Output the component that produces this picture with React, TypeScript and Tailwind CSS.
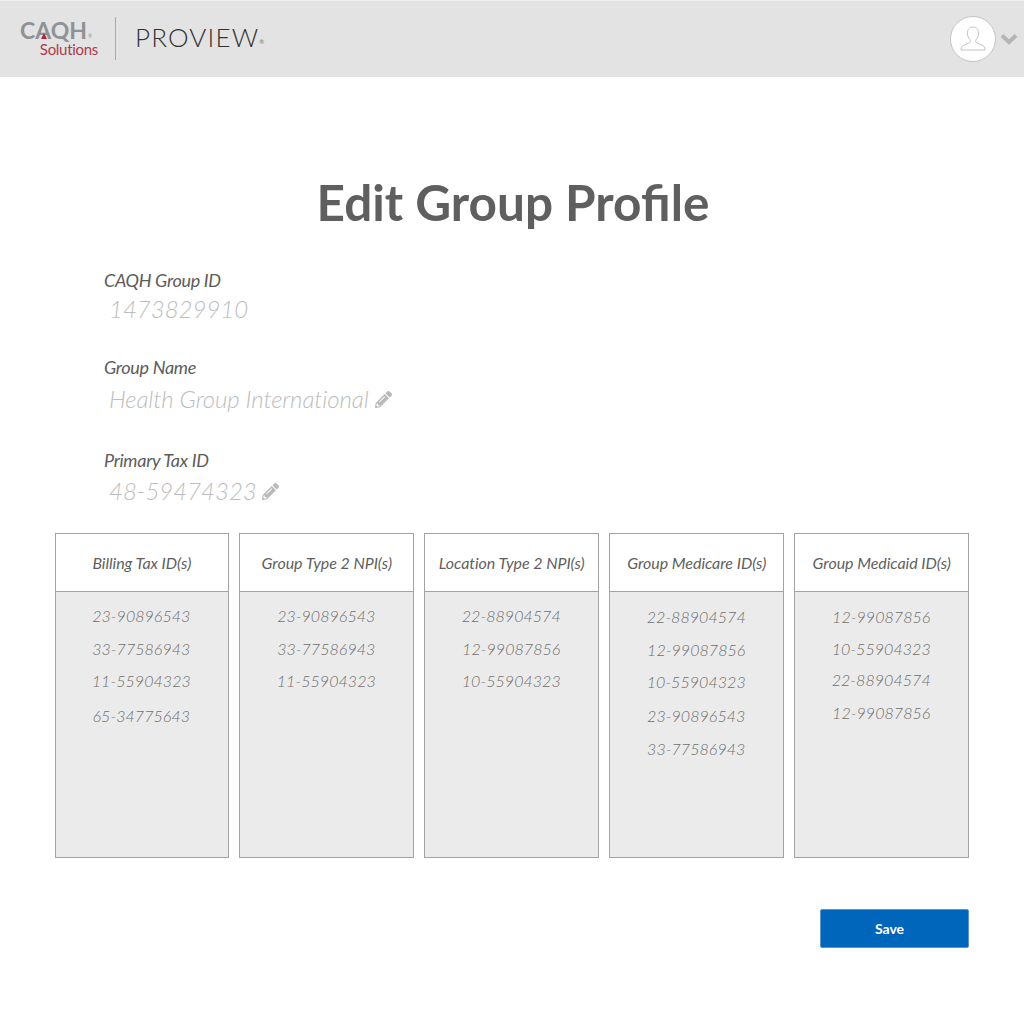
import React from "react";
import { FaPencilAlt } from "react-icons/fa";

type Row = { t: string; c: string };

const columns: { title: string; rows: Row[] }[] = [
  {
    title: "Billing Tax ID(s)",
    rows: [
      { t: "23-90896543", c: "mt-[14px]" },
      { t: "33-77586943", c: "mt-[13px]" },
      { t: "11-55904323", c: "mt-[12px]" },
      { t: "65-34775643", c: "mt-[15px]" },
    ],
  },
  {
    title: "Group Type 2 NPI(s)",
    rows: [
      { t: "23-90896543", c: "mt-[14px]" },
      { t: "33-77586943", c: "mt-[13px]" },
      { t: "11-55904323", c: "mt-[12px]" },
    ],
  },
  {
    title: "Location Type 2 NPI(s)",
    rows: [
      { t: "22-88904574", c: "mt-[14px]" },
      { t: "12-99087856", c: "mt-[13px]" },
      { t: "10-55904323", c: "mt-[12px]" },
    ],
  },
  {
    title: "Group Medicare ID(s)",
    rows: [
      { t: "22-88904574", c: "mt-[15px]" },
      { t: "12-99087856", c: "mt-[13px]" },
      { t: "10-55904323", c: "mt-[12px]" },
      { t: "23-90896543", c: "mt-[14px]" },
      { t: "33-77586943", c: "mt-[13px]" },
    ],
  },
  {
    title: "Group Medicaid ID(s)",
    rows: [
      { t: "12-99087856", c: "mt-[15px]" },
      { t: "10-55904323", c: "mt-[12px]" },
      { t: "22-88904574", c: "mt-[11px]" },
      { t: "12-99087856", c: "mt-[13px]" },
    ],
  },
];

export default function App() {
  return (
    <div className="w-[1024px] h-[1024px] bg-white font-['Lato',sans-serif] overflow-hidden">
      <header className="h-[77px] bg-[#e3e3e3] border-t border-t-[#efefef] flex items-center pl-[20px] pr-[6px]">
        <div className="relative w-[78px] flex flex-col items-end mt-[-3px]">
          <div className="flex items-start w-full h-[22px]">
            <span className="text-[23px] leading-[22px] font-bold text-[#8f9294]">CAQH</span>
            <span className="text-[5px] leading-[5px] text-[#999] mt-[15px] ml-[1px]">®</span>
          </div>
          <span className="text-[15px] leading-[16px] tracking-[-0.3px] text-[#b03a4c]">Solutions</span>
          <svg viewBox="0 0 6 6" className="absolute left-[21px] top-[14px] w-[6px] h-[6px]" fill="#a8283c">
            <path d="M3 0l3 6H0z" />
          </svg>
        </div>
        <div className="w-px h-[43px] bg-[#a9a9a9] ml-[17px] mt-[-2px]" />
        <div className="ml-[19px] flex items-end text-[#333] mt-[-4px]">
          <span className="text-[26px] leading-[30px] font-light tracking-[1.150px]">PROVIEW</span>
          <span className="text-[6px] leading-[6px] text-[#777] mb-[7px]">®</span>
        </div>
        <div className="ml-auto flex items-center">
          <div className="w-[46px] h-[46px] rounded-full bg-white border border-[#c4c4c4] flex items-center justify-center">
            <svg viewBox="0 0 30 30" className="w-[30px] h-[30px]" fill="none" stroke="#c2c2c2" strokeWidth="1">
              <path d="M15 3c-3.6 0-5.6 2.6-5.6 6 0 2.6 1 5 2.4 6.6.7.8.7 2.3-.2 3-1.700 1.300-5.800 2.200-7.400 3.700-1 .9-1.200 2.500-1.200 3.700h24c0-1.200-.2-2.800-1.200-3.700-1.600-1.500-5.700-2.400-7.400-3.700-.9-.7-.9-2.200-.2-3 1.400-1.600 2.400-4 2.400-6.600 0-3.400-2-6-5.600-6z" />
            </svg>
          </div>
          <svg viewBox="0 0 18 12" className="w-[18px] h-[12px] ml-[4px]" fill="none" stroke="#b5b5b5" strokeWidth="4">
            <path d="M2 2.500l7 6.500 7-6.500" />
          </svg>
        </div>
      </header>

      <main className="pt-[96px]">
        <h1 className="text-center text-[49.500px] leading-[58px] font-bold text-[#5f5f5f] pl-[2px]">
          Edit Group Profile
        </h1>

        <section className="pl-[104px] mt-[38px]">
          <div className="text-[18px] leading-[22px] italic text-[#5c5c5c] tracking-[-0.3px]">CAQH Group ID</div>
          <div className="text-[24px] leading-[32px] italic font-light text-[#bdbdbd] mt-[2px] pl-[5px]">1473829910</div>

          <div className="text-[18px] leading-[22px] italic text-[#5c5c5c] tracking-[-0.3px] mt-[31px]">Group Name</div>
          <div className="flex items-center mt-[5px] pl-[5px]">
            <span className="text-[24px] leading-[32px] italic font-light text-[#bdbdbd] tracking-[-0.1px]">Health Group International</span>
            <FaPencilAlt className="w-[17px] h-[17px] ml-[6px] text-[#b9b9b9]" />
          </div>

          <div className="text-[18px] leading-[22px] italic text-[#5c5c5c] tracking-[-0.3px] mt-[34px]">Primary Tax ID</div>
          <div className="flex items-center mt-[4px] pl-[5px]">
            <span className="text-[24px] leading-[32px] italic font-light text-[#bdbdbd]">48-59474323</span>
            <FaPencilAlt className="w-[17px] h-[17px] ml-[5px] text-[#b9b9b9]" />
          </div>
        </section>

        <section className="flex gap-[10.400px] pl-[54.500px] mt-[26px]">
          {columns.map((col) => (
            <div key={col.title} className="w-[174.600px] h-[325px] border border-[#a3a3a3] flex flex-col">
              <div className="h-[58px] flex items-center justify-center border-b border-[#a3a3a3] text-[16px] italic text-[#5f5f5f] tracking-[-0.05px] shrink-0">
                {col.title}
              </div>
              <div className="flex-1 bg-[#ebebeb] flex flex-col items-center pr-[1px]">
                {col.rows.map((r, i) => (
                  <div key={i} className={`text-[16px] leading-[20px] italic font-light text-[#6e6e6e] tracking-[0.05px] ${r.c}`}>
                    {r.t}
                  </div>
                ))}
              </div>
            </div>
          ))}
        </section>

        <div className="flex justify-end pr-[55px] mt-[51px]">
          <button className="w-[149px] h-[39px] rounded-[2px] bg-[#0066bb] border border-[#5a94c8] text-white text-[14px] font-bold pr-[10px]">
            Save
          </button>
        </div>
      </main>
    </div>
  );
}
